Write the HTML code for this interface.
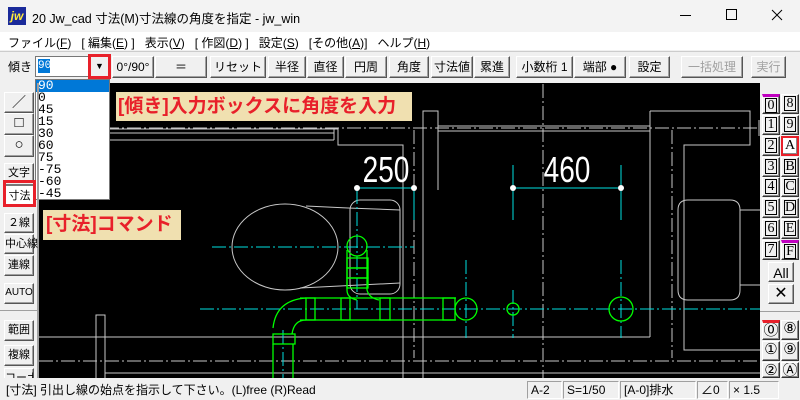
<!DOCTYPE html>
<html><head><meta charset="utf-8"><style>
*{margin:0;padding:0;box-sizing:border-box}
body{width:800px;height:400px;overflow:hidden;background:#f0f0f0;font-family:"Liberation Sans","Noto Sans CJK JP",sans-serif;font-size:12px;color:#000;position:relative}
.a{position:absolute}
.btn{position:absolute;background:#f0f0f0;border:1px solid;border-color:#fff #555 #555 #fff;box-shadow:inset -1px -1px 0 #a0a0a0;text-align:center;font-size:12px;line-height:20px;white-space:nowrap}
.dis{color:#a0a0a0}
.lb{font-size:11px;line-height:18px}
.rb{position:absolute;width:18px;height:20px;background:#f0f0f0;border:1px solid;border-color:#fff #333 #333 #fff;box-shadow:inset -1px -1px 0 #888;font-family:"Liberation Serif",serif;font-size:14px;text-align:center;line-height:17px;overflow:hidden}
.rb i{display:block;width:12px;height:15px;margin:1px auto;border:1px solid #000;font-style:normal;line-height:13px}
.sb{position:absolute;top:381px;height:18px;border:1px solid;border-color:#a0a0a0 #fff #fff #a0a0a0;line-height:16px;padding-left:3px;font-size:12px}
.dd div{height:12px;line-height:12px;font-size:13px;padding-left:2px;font-family:"Liberation Mono",monospace}
</style></head><body>
<div class="a" style="left:0;top:0;width:800px;height:32px;background:#f3f3f3"></div>
<div class="a" style="left:8px;top:7px;width:18px;height:18px;background:#1a2a9a;color:#ffeb3b;font-weight:bold;font-style:italic;font-size:12px;line-height:18px;text-align:center">jw</div>
<div class="a" style="left:32px;top:8px;font-size:12.5px">20 Jw_cad 寸法(M)寸法線の角度を指定 - jw_win</div>
<svg class="a" style="left:0;top:0" width="800" height="32"><g stroke="#000" fill="none" stroke-width="1"><line x1="280" y1="15.5" x2="291" y2="15.5" transform="translate(400,0)"/><rect x="726.5" y="9.5" width="10" height="10"/><path d="M772 10 L782 20 M782 10 L772 20"/></g></svg>
<div class="a" style="left:0;top:32px;width:800px;height:18px;background:#fff"></div>
<div class="a" style="left:8px;top:34px;font-size:12px">ファイル(<u>F</u>)&nbsp;&nbsp;&nbsp;[ 編集(<u>E</u>) ]&nbsp;&nbsp;&nbsp;表示(<u>V</u>)&nbsp;&nbsp;&nbsp;[ 作図(<u>D</u>) ]&nbsp;&nbsp;&nbsp;設定(<u>S</u>)&nbsp;&nbsp;&nbsp;[その他(<u>A</u>)]&nbsp;&nbsp;&nbsp;ヘルプ(<u>H</u>)</div>
<div class="a" style="left:0;top:51px;width:800px;height:1px;background:#ccc"></div>
<div class="a" style="left:8px;top:58px;font-size:12px">傾き</div>
<div class="a" style="left:35px;top:56px;width:75px;height:21px;background:#fff;border:1px solid #777"></div>
<div class="a" style="left:38px;top:59px;width:12px;height:14px;background:#0078d7;color:#fff;font-size:11px;line-height:14px;font-family:'Liberation Mono',monospace">90</div>
<div class="a" style="left:88px;top:54px;width:23px;height:25px;border:3px solid #e8202a;background:#f0f0f0;text-align:center;font-size:9px;line-height:18px">▼</div>
<div class="btn" style="left:112px;top:56px;width:42px;height:22px">0°/90°</div>
<div class="btn" style="left:155px;top:56px;width:52px;height:22px">＝</div>
<div class="btn" style="left:210px;top:56px;width:56px;height:22px">リセット</div>
<div class="btn" style="left:268px;top:56px;width:38px;height:22px">半径</div>
<div class="btn" style="left:307px;top:56px;width:37px;height:22px">直径</div>
<div class="btn" style="left:345px;top:56px;width:42px;height:22px">円周</div>
<div class="btn" style="left:389px;top:56px;width:40px;height:22px">角度</div>
<div class="btn" style="left:431px;top:56px;width:42px;height:22px">寸法値</div>
<div class="btn" style="left:474px;top:56px;width:36px;height:22px">累進</div>
<div class="btn" style="left:516px;top:56px;width:57px;height:22px">小数桁 1</div>
<div class="btn" style="left:574px;top:56px;width:52px;height:22px">端部 ●</div>
<div class="btn" style="left:629px;top:56px;width:41px;height:22px">設定</div>
<div class="btn dis" style="left:681px;top:56px;width:62px;height:22px">一括処理</div>
<div class="btn dis" style="left:751px;top:56px;width:35px;height:22px">実行</div>
<div class="a" style="left:39px;top:83px;width:721px;height:295px;background:#000"></div>
<svg class="a" style="left:0;top:0" width="800" height="400" viewBox="0 0 800 400">
<g fill="none" stroke="#c8c8c8" stroke-width="1">
<line x1="110" y1="129" x2="338" y2="129"/><line x1="110" y1="133" x2="334" y2="133"/>
<line x1="110" y1="140" x2="334" y2="140"/>
<polyline points="334,140 334,129 338,129 338,145 403,145 403,378"/>
<polyline points="423,378 423,111 438,111 438,190"/>
<line x1="438" y1="126" x2="650" y2="126"/><line x1="438" y1="131" x2="650" y2="131"/>
<polyline points="650,111 750,111 750,145 684,145 684,350 760,350"/>
<line x1="650" y1="111" x2="650" y2="337"/><line x1="39" y1="337" x2="650" y2="337"/>
<line x1="759" y1="120" x2="759" y2="136"/>
<polyline points="96,378 96,315 105,315 105,378"/>
<line x1="105" y1="373" x2="760" y2="373"/>
<ellipse cx="285" cy="247" rx="53" ry="43"/>
<polyline points="306,206 348,208 400,210"/><polyline points="300,288 400,283"/>
<rect x="350" y="200" width="50" height="94" rx="10"/>
<path d="M688 200 h42 q10 0 10 10 v80 q0 10 -10 10 h-42 q-10 0 -10 -10 v-80 q0 -10 10 -10z"/>
<line x1="740" y1="210" x2="760" y2="210"/><line x1="740" y1="285" x2="760" y2="285"/>
</g>
<g fill="none" stroke="#c8c8c8" stroke-dasharray="14,3,2,3">
<line x1="39" y1="128" x2="760" y2="128"/><line x1="39" y1="361" x2="760" y2="361"/>
<line x1="414" y1="130" x2="414" y2="358"/><line x1="543" y1="84" x2="543" y2="378"/>
<line x1="672" y1="130" x2="672" y2="358"/>
</g>
<g fill="none" stroke="#00e0e0" stroke-dasharray="14,3,2,3">
<line x1="212" y1="247" x2="414" y2="247"/><line x1="200" y1="309" x2="760" y2="309"/>
<line x1="357" y1="190" x2="357" y2="309"/><line x1="466" y1="260" x2="466" y2="338"/>
<line x1="513" y1="290" x2="513" y2="338"/><line x1="621" y1="260" x2="621" y2="338"/>
<line x1="283" y1="330" x2="283" y2="378"/>
</g>
<g stroke="#00e0e0"><line x1="357" y1="188" x2="414" y2="188"/><line x1="513" y1="188" x2="621" y2="188"/>
<line x1="414" y1="188" x2="414" y2="220"/><line x1="513" y1="165" x2="513" y2="220"/><line x1="621" y1="165" x2="621" y2="220"/></g>
<g fill="#fff"><circle cx="357" cy="188" r="3"/><circle cx="414" cy="188" r="3"/><circle cx="513" cy="188" r="3"/><circle cx="621" cy="188" r="3"/></g>
<g fill="none" stroke="#00ff00" stroke-width="1.3">
<circle cx="357" cy="246" r="10"/><rect x="347" y="258" width="21" height="10"/><rect x="347" y="268" width="21" height="10"/><rect x="347" y="278" width="21" height="10"/>
<line x1="347" y1="250" x2="347" y2="290"/><line x1="367" y1="250" x2="367" y2="290"/>
<path d="M347 290 q0 8 10 10 M367 290 q2 8 12 10"/>
<line x1="300" y1="298" x2="456" y2="298"/><line x1="300" y1="320" x2="456" y2="320"/>
<rect x="306" y="298" width="9" height="22"/><rect x="341" y="298" width="9" height="22"/><rect x="380" y="298" width="10" height="22"/><rect x="443" y="298" width="12" height="22"/>
<circle cx="466" cy="309" r="11"/><circle cx="513" cy="309" r="6"/><circle cx="621" cy="309" r="12"/>
<path d="M306 298 q-30 2 -33 30 M306 320 q-12 0 -14 14"/>
<rect x="273" y="334" width="22" height="10"/><line x1="273" y1="344" x2="273" y2="378"/><line x1="293" y1="344" x2="293" y2="378"/>
</g>
<text transform="translate(386,182) scale(0.78,1)" fill="#fff" font-family="Liberation Sans,sans-serif" font-size="36" text-anchor="middle">250</text>
<text transform="translate(567,182) scale(0.78,1)" fill="#fff" font-family="Liberation Sans,sans-serif" font-size="36" text-anchor="middle">460</text>
</svg>
<div class="a" style="left:116px;top:92px;width:296px;height:29px;background:#f0e0b0;color:#e8202a;font-weight:bold;font-size:19px;line-height:29px;padding-left:2px;white-space:nowrap">[傾き]入力ボックスに角度を入力</div>
<div class="a" style="left:43px;top:210px;width:138px;height:30px;background:#f0e0b0;color:#e8202a;font-weight:bold;font-size:19px;line-height:30px;padding-left:3px;white-space:nowrap">[寸法]コマンド</div>
<div class="a dd" style="left:35px;top:79px;width:75px;height:121px;background:#fff;border:1px solid #777">
<div style="background:#0078d7;color:#fff">90</div><div>0</div><div>45</div><div>15</div><div>30</div><div>60</div><div>75</div><div>-75</div><div>-60</div><div>-45</div></div>
<div class="a" style="left:37px;top:83px;width:2px;height:295px;background:#a0a0a0"></div>
<div class="btn" style="left:4px;top:92px;width:30px;height:21px;font-size:14px;line-height:18px">／</div>
<div class="btn" style="left:4px;top:113px;width:30px;height:22px;font-size:15px;line-height:18px">□</div>
<div class="btn" style="left:4px;top:135px;width:30px;height:22px;font-size:15px;line-height:18px">○</div>
<div class="btn lb" style="left:4px;top:163px;width:30px;height:20px">文字</div>
<div class="a" style="left:3px;top:180px;width:33px;height:27px;border:3px solid #e8202a"></div>
<div class="a lb" style="left:6px;top:184px;width:27px;height:20px;background:#fff;text-align:center;line-height:20px;border-top:2px solid #777">寸法</div>
<div class="btn lb" style="left:4px;top:213px;width:30px;height:20px">２線</div>
<div class="btn lb" style="left:4px;top:234px;width:30px;height:20px">中心線</div>
<div class="btn lb" style="left:4px;top:255px;width:30px;height:21px">連線</div>
<div class="btn lb" style="left:4px;top:283px;width:30px;height:21px;font-size:10px">AUTO</div>
<div class="a" style="left:0;top:310px;width:37px;height:1px;background:#a0a0a0"></div>
<div class="btn lb" style="left:4px;top:320px;width:30px;height:21px">範囲</div>
<div class="btn lb" style="left:4px;top:345px;width:30px;height:21px">複線</div>
<div class="btn lb" style="left:4px;top:368px;width:30px;height:12px;overflow:hidden">コーナー</div>
<div class="rb" style="left:762px;top:94px;border-top:3px solid #c000c0"><i>0</i></div>
<div class="rb" style="left:781px;top:94px"><i>8</i></div>
<div class="rb" style="left:762px;top:115px"><i>1</i></div><div class="rb" style="left:781px;top:115px"><i>9</i></div>
<div class="rb" style="left:762px;top:136px"><i>2</i></div><div class="rb" style="left:781px;top:136px;border:2px solid #e8202a;background:#fff"><i style="border:none">A</i></div>
<div class="rb" style="left:762px;top:157px"><i>3</i></div><div class="rb" style="left:781px;top:157px"><i>B</i></div>
<div class="rb" style="left:762px;top:177px"><i>4</i></div><div class="rb" style="left:781px;top:177px"><i>C</i></div>
<div class="rb" style="left:762px;top:198px"><i>5</i></div><div class="rb" style="left:781px;top:198px"><i>D</i></div>
<div class="rb" style="left:762px;top:219px"><i>6</i></div><div class="rb" style="left:781px;top:219px"><i>E</i></div>
<div class="rb" style="left:762px;top:240px"><i>7</i></div><div class="rb" style="left:781px;top:240px;border-top:3px solid #c000c0"><i>F</i></div>
<div class="btn" style="left:768px;top:262px;width:26px;height:20px;font-size:14px">All</div>
<div class="btn" style="left:768px;top:284px;width:26px;height:20px;font-size:16px;line-height:18px">✕</div>
<div class="a" style="left:760px;top:311px;width:40px;height:1px;background:#a0a0a0"></div>
<div class="rb" style="left:762px;top:320px;border-top:3px solid #e8202a;font-size:15px">⓪</div><div class="rb" style="left:781px;top:320px;font-size:15px">⑧</div>
<div class="rb" style="left:762px;top:341px;font-size:15px">①</div><div class="rb" style="left:781px;top:341px;font-size:15px">⑨</div>
<div class="rb" style="left:762px;top:362px;height:16px;font-size:15px">②</div><div class="rb" style="left:781px;top:362px;height:16px;font-size:15px">Ⓐ</div>
<div class="a" style="left:0;top:378px;width:800px;height:22px;background:#f0f0f0"></div>
<div class="sb" style="left:2px;width:524px;border-color:transparent">[寸法] 引出し線の始点を指示して下さい。(L)free (R)Read</div>
<div class="sb" style="left:527px;width:35px">A-2</div>
<div class="sb" style="left:563px;width:56px">S=1/50</div>
<div class="sb" style="left:620px;width:76px">[A-0]排水</div>
<div class="sb" style="left:697px;width:31px">∠0</div>
<div class="sb" style="left:729px;width:50px">× 1.5</div>
</body></html>
